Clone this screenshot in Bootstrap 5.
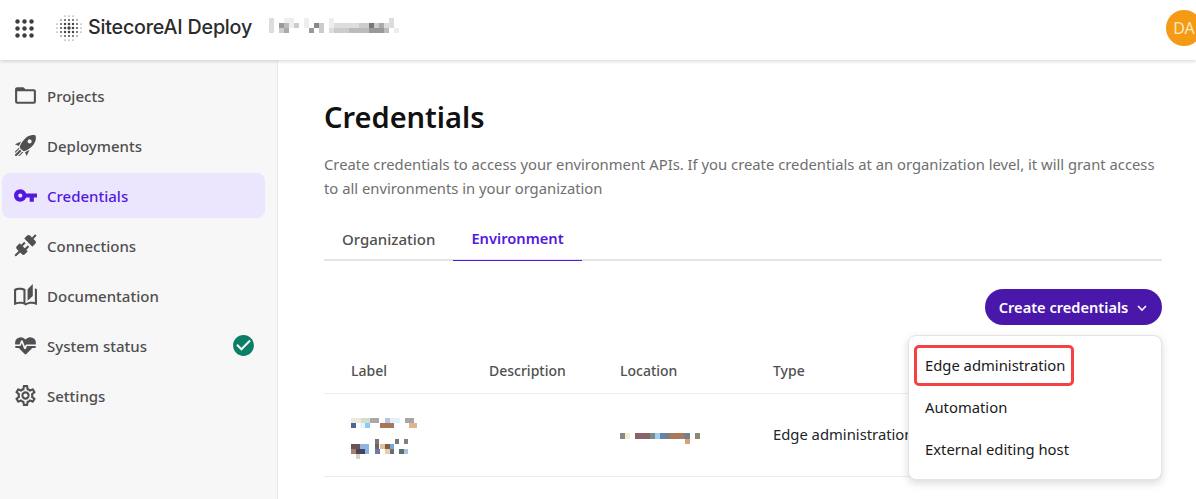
<!DOCTYPE html>
<html lang="en">
<head>
  <meta charset="UTF-8" />
  <meta name="viewport" content="width=device-width, initial-scale=1" />
  <title>Credentials - SitecoreAI Deploy</title>
  <link href="https://cdn.jsdelivr.net/npm/bootstrap@5.3.0/dist/css/bootstrap.min.css" rel="stylesheet" />
  <style>
    html, body { height: 100%; overflow: hidden; }
    body { font-family: "Noto Sans", sans-serif; font-size: 14.8px; color: #1a1a1a; background: #fff; }

    .app-header { height: 60px; padding: 0 0 4px 15px; background: #fff; box-shadow: 0 1px 4px rgba(0,0,0,.18); position: relative; z-index: 2; }
    .waffle { width: 19px; height: 19px; fill: #3d3d3d; }
    .logo { width: 26px; height: 26px; margin-left: 22px; margin-right: 6px; }
    .brand { font-family: Inter, sans-serif; font-size: 19.7px; font-weight: 500; color: #2b2b2b; letter-spacing: -.2px; }
    .org-blur { margin-left: 17px; }
    .avatar { width: 36px; height: 36px; margin-left: auto; margin-right: -6px; background: #f59a14; color: #fde7c0; font-size: 16px; }

    .app-body { height: 439px; }
    .sidebar { width: 278px; flex: none; padding: 13px 12px 0 2px; background: #f7f7f7; border-right: 1px solid #e8e8e8; gap: 5px; }
    .side-link { height: 45px; padding: 2px 9px 0 11px; gap: 9px; border-radius: 8px; color: #4f4f4f; font-size: 15px; font-weight: 500; text-decoration: none; }
    .side-link svg { width: 25px; height: 25px; margin-top: -2px; fill: #505050; flex: none; }
    .side-link.active { background: #ebe6fd; color: #5319e0; }
    .side-link.active svg { fill: #5319e0; }
    .side-link .status { margin-left: auto; fill: #0a7f66; }

    .content { padding: 0 34px 0 46px; min-width: 0; }
    .content h1 { margin: 37px 0 0; font-size: 29px; line-height: 40px; font-weight: 600; color: #111; }
    .lead-text { margin: 15px 0 0; line-height: 24px; color: #6f6f6f; }

    .tabs { margin-top: 17px; border-bottom: 2px solid #e4e4e4; height: 44px; }
    .tabs .nav-link { height: 44px; padding: 0 18px; border-radius: 0; color: #505050; font-size: 15px; font-weight: 500; display: flex; align-items: center; }
    .tabs .nav-link.active { color: #5319e0; font-size: 14.7px; font-weight: 600; border-bottom: 1px solid #5319e0; }

    .btn-create { height: 36px; width: 177px; padding: 1px 0 0; border: 0; border-radius: 18px; background: #4a17ab; color: #fff; font-weight: 600; font-size: 14.6px; gap: 8px; }
    .btn-create:hover, .btn-create:active { background: #4a17ab !important; color: #fff !important; }
    .btn-create svg { width: 12px; height: 12px; stroke: #fff; fill: none; stroke-width: 1.6; }
    .toolbar { margin-top: 28px; position: relative; }

    .menu { display: block; right: 0; top: 46px; width: 254px; padding: 9px 5px; border: 1px solid #e4e4e4; border-radius: 8px; box-shadow: 0 3px 8px rgba(0,0,0,.15); z-index: 3; font-size: 14.8px; }
    .menu .dropdown-item { height: 42px; padding: 0 11px; display: flex; align-items: center; color: #1a1a1a; }
    .menu .dropdown-item.marked { width: 160px; height: 41px; outline: 3px solid #f44144; outline-offset: -3px; border-radius: 5px; }

    .cred-table { margin: 22px 0 0; table-layout: fixed; width: 100%; --bs-table-border-color: #ececec; }
    .cred-table th { height: 46px; padding: 1px 0 0 27px; vertical-align: middle; color: #505050; font-size: 14px; font-weight: 500; }
    .cred-table td { height: 83px; padding: 0 0 0 27px; vertical-align: middle; white-space: nowrap; }
    .redact-label { margin-top: 9px; }
    .redact-location { margin-top: 8px; }
  </style>
</head>
<body class="d-flex flex-column">
  <header class="app-header d-flex align-items-center">
    <svg class="waffle" viewBox="0 0 19 19">
      <circle cx="2.5" cy="2.5" r="2.2"/><circle cx="9.5" cy="2.5" r="2.2"/><circle cx="16.5" cy="2.5" r="2.2"/>
      <circle cx="2.5" cy="9.5" r="2.2"/><circle cx="9.5" cy="9.5" r="2.2"/><circle cx="16.5" cy="9.5" r="2.2"/>
      <circle cx="2.5" cy="16.5" r="2.2"/><circle cx="9.5" cy="16.5" r="2.2"/><circle cx="16.5" cy="16.5" r="2.2"/>
    </svg>
    <svg class="logo" id="logo" viewBox="-13 -13 26 26" fill="#444"></svg>
    <span class="brand">SitecoreAI Deploy</span>
    <svg class="org-blur" id="orgBlur" width="140" height="20" viewBox="0 0 140 20"></svg>
    <div class="avatar rounded-circle d-flex align-items-center justify-content-center">DA</div>
  </header>

  <div class="app-body d-flex">
    <nav class="sidebar d-flex flex-column">
      <a href="#" class="side-link d-flex align-items-center">
        <svg viewBox="0 0 24 24"><path d="M20,18H4V8H20M20,6H12L10,4H4C2.89,4 2,4.89 2,6V18A2,2 0 0,0 4,20H20A2,2 0 0,0 22,18V8C22,6.89 21.1,6 20,6Z"/></svg>
        Projects
      </a>
      <a href="#" class="side-link d-flex align-items-center">
        <svg viewBox="0 0 24 24"><path d="M13.13 22.19L11.5 18.36C13.07 17.78 14.54 17 15.9 16.09L13.13 22.19M5.64 12.5L1.81 10.87L7.91 8.1C7 9.46 6.22 10.93 5.64 12.5M21.61 2.39C21.61 2.39 16.66 .269 11 5.93C8.81 8.12 7.5 10.53 6.65 12.64C6.37 13.39 6.56 14.21 7.11 14.77L9.24 16.89C9.79 17.45 10.61 17.63 11.36 17.35C13.5 16.53 15.88 15.19 18.07 13C23.73 7.34 21.61 2.39 21.61 2.39M14.54 9.46C13.76 8.68 13.76 7.41 14.54 6.63S16.59 5.85 17.37 6.63C18.14 7.41 18.15 8.68 17.37 9.46C16.59 10.24 15.32 10.24 14.54 9.46M6.24 22L9.88 18.36C9.54 18.27 9.21 18.12 8.91 17.91L4.83 22H6.24M2 22H3.41L8.18 17.24L6.76 15.83L2 20.59V22M2 19.17L6.09 15.09C5.88 14.79 5.73 14.47 5.64 14.12L2 17.76V19.17Z"/></svg>
        Deployments
      </a>
      <a href="#" class="side-link active d-flex align-items-center">
        <svg viewBox="0 0 24 24"><path d="M7 14C5.9 14 5 13.1 5 12S5.9 10 7 10 9 10.9 9 12 8.1 14 7 14M12.6 10C11.8 7.7 9.6 6 7 6C3.7 6 1 8.7 1 12S3.7 18 7 18C9.6 18 11.8 16.3 12.6 14H16V18H20V14H23V10H12.6Z"/></svg>
        Credentials
      </a>
      <a href="#" class="side-link d-flex align-items-center">
        <svg viewBox="0 0 24 24"><path d="M21.4 7.5C22.2 8.3 22.2 9.6 21.4 10.3L18.6 13.1L10.8 5.3L13.6 2.5C14.4 1.7 15.7 1.7 16.4 2.5L18.2 4.3L21.2 1.3L22.6 2.7L19.6 5.7L21.4 7.5M15.6 13.3L14.2 11.9L11.4 14.7L9.3 12.6L12.1 9.8L10.7 8.4L7.9 11.2L6.4 9.8L3.6 12.6C2.8 13.4 2.8 14.7 3.6 15.4L5.4 17.2L1.4 21.2L2.8 22.6L6.8 18.6L8.6 20.4C9.4 21.2 10.7 21.2 11.4 20.4L14.2 17.6L12.8 16.2L15.6 13.3Z"/></svg>
        Connections
      </a>
      <a href="#" class="side-link d-flex align-items-center">
        <svg viewBox="0 0 24 24"><path d="M19 1L14 6V17L19 12.5V1M21 5V18.5C19.9 18.15 18.7 18 17.5 18C15.8 18 13.35 18.65 12 19.5V6C10.55 4.9 8.45 4.5 6.5 4.5C4.55 4.5 2.45 4.9 1 6V20.65C1 20.9 1.25 21.15 1.5 21.15C1.6 21.15 1.65 21.1 1.75 21.1C3.1 20.45 5.05 20 6.5 20C8.45 20 10.55 20.4 12 21.5C13.35 20.65 15.8 20 17.5 20C19.15 20 20.85 20.3 22.25 21.05C22.35 21.1 22.4 21.1 22.5 21.1C22.75 21.1 23 20.85 23 20.6V6C22.4 5.55 21.75 5.25 21 5M10 18.41C8.75 18.09 7.5 18 6.5 18C5.44 18 4.18 18.19 3 18.5V7.13C3.91 6.73 5.14 6.5 6.5 6.5C7.86 6.5 9.09 6.73 10 7.13V18.41Z"/></svg>
        Documentation
      </a>
      <a href="#" class="side-link d-flex align-items-center">
        <svg viewBox="0 0 24 24"><path d="M7.5,4A5.5,5.5 0 0,0 2,9.5C2,10 2.09,10.5 2.22,11H6.3L7.57,7.63C7.87,6.83 9.05,6.75 9.43,7.63L11.5,13L12.09,11.58C12.22,11.25 12.57,11 13,11H21.78C21.91,10.5 22,10 22,9.5A5.5,5.5 0 0,0 16.5,4C14.64,4 13,4.93 12,6.34C11,4.93 9.36,4 7.5,4M3,12.5A1,1 0 0,0 2,13.5A1,1 0 0,0 3,14.5H5.44L11,20C12,20.9 12,20.9 13,20L18.56,14.5H21A1,1 0 0,0 22,13.5A1,1 0 0,0 21,12.5H13.4L12.47,14.8C12.07,15.81 10.92,15.67 10.55,14.83L8.5,9.5L7.54,11.83C7.39,12.23 7.05,12.5 6.6,12.5H3Z"/></svg>
        System status
        <svg class="status" viewBox="0 0 24 24"><path d="M12 2C6.5 2 2 6.5 2 12S6.5 22 12 22 22 17.5 22 12 17.5 2 12 2M10 17L5 12L6.41 10.59L10 14.17L17.59 6.58L19 8L10 17Z"/></svg>
      </a>
      <a href="#" class="side-link d-flex align-items-center">
        <svg viewBox="0 0 24 24"><path d="M12,8A4,4 0 0,1 16,12A4,4 0 0,1 12,16A4,4 0 0,1 8,12A4,4 0 0,1 12,8M12,10A2,2 0 0,0 10,12A2,2 0 0,0 12,14A2,2 0 0,0 14,12A2,2 0 0,0 12,10M10,22C9.75,22 9.54,21.82 9.5,21.58L9.13,18.93C8.5,18.68 7.96,18.34 7.44,17.94L4.95,18.95C4.73,19.03 4.46,18.95 4.34,18.73L2.34,15.27C2.21,15.05 2.27,14.78 2.46,14.63L4.57,12.97L4.5,12L4.57,11L2.46,9.37C2.27,9.22 2.21,8.95 2.34,8.73L4.34,5.27C4.46,5.05 4.73,4.96 4.95,5.05L7.44,6.05C7.96,5.66 8.5,5.32 9.13,5.07L9.5,2.42C9.54,2.18 9.75,2 10,2H14C14.25,2 14.46,2.18 14.5,2.42L14.87,5.07C15.5,5.32 16.04,5.66 16.56,6.05L19.05,5.05C19.27,4.96 19.54,5.05 19.66,5.27L21.66,8.73C21.79,8.95 21.73,9.22 21.54,9.37L19.43,11L19.5,12L19.43,13L21.54,14.63C21.73,14.78 21.79,15.05 21.66,15.27L19.66,18.73C19.54,18.95 19.27,19.04 19.05,18.95L16.56,17.95C16.04,18.34 15.5,18.68 14.87,18.93L14.5,21.58C14.46,21.82 14.25,22 14,22H10M11.25,4L10.88,6.61C9.68,6.86 8.62,7.5 7.85,8.39L5.44,7.35L4.69,8.65L6.8,10.2C6.4,11.37 6.4,12.64 6.8,13.8L4.68,15.36L5.43,16.66L7.86,15.62C8.63,16.5 9.68,17.14 10.87,17.38L11.24,20H12.76L13.13,17.39C14.32,17.14 15.37,16.5 16.14,15.62L18.57,16.66L19.32,15.36L17.2,13.81C17.6,12.64 17.6,11.37 17.2,10.2L19.31,8.65L18.56,7.35L16.15,8.39C15.38,7.5 14.32,6.86 13.12,6.62L12.75,4H11.25Z"/></svg>
        Settings
      </a>
    </nav>

    <main class="content flex-grow-1">
      <h1>Credentials</h1>
      <p class="lead-text">Create credentials to access your environment APIs. If you create credentials at an organization level, it will grant access to all environments in your organization</p>

      <ul class="nav tabs">
        <li class="nav-item"><a class="nav-link" href="#">Organization</a></li>
        <li class="nav-item"><a class="nav-link active" href="#">Environment</a></li>
      </ul>

      <div class="toolbar d-flex justify-content-end">
        <button class="btn btn-create d-flex align-items-center justify-content-center" type="button">
          Create credentials
          <svg viewBox="0 0 12 12"><path d="M2 4l4 4 4-4"/></svg>
        </button>
        <div class="dropdown-menu menu">
          <a class="dropdown-item marked" href="#">Edge administration</a>
          <a class="dropdown-item" href="#">Automation</a>
          <a class="dropdown-item" href="#">External editing host</a>
        </div>
      </div>

      <table class="table cred-table">
        <colgroup><col style="width:138px"><col style="width:131px"><col style="width:153px"><col></colgroup>
        <thead>
          <tr><th>Label</th><th>Description</th><th>Location</th><th>Type</th></tr>
        </thead>
        <tbody>
          <tr>
            <td>
              <svg width="66" height="43" viewBox="0 0 66 43" class="d-block redact-label">
                <rect x="0" y="0" width="10" height="5" fill="#eee9e0"/><rect x="10" y="0" width="9" height="5" fill="#d5dccb"/><rect x="19" y="0" width="9" height="5" fill="#a9a9a9"/><rect x="34" y="0" width="5" height="5" fill="#b7c6de"/><rect x="39" y="0" width="10" height="5" fill="#e0f3fb"/><rect x="54" y="0" width="9" height="5" fill="#aaa6a3"/>
                <rect x="0" y="5" width="5" height="5" fill="#4c6698"/><rect x="9" y="5" width="5" height="5" fill="#dff8ff"/><rect x="14" y="5" width="5" height="5" fill="#8fc8f3"/><rect x="29" y="5" width="14" height="5" fill="#a8775a"/><rect x="58" y="5" width="9" height="5" fill="#dcb68f"/>
                <rect x="24" y="21" width="4" height="5" fill="#777"/><rect x="44" y="21" width="4" height="5" fill="#777"/><rect x="53" y="21" width="4" height="5" fill="#808080"/>
                <rect x="0" y="26" width="9" height="5" fill="#6f5158"/><rect x="9" y="26" width="9" height="5" fill="#8fb5de"/><rect x="24" y="26" width="4" height="5" fill="#666"/><rect x="29" y="26" width="5" height="5" fill="#e0bf9d"/><rect x="34" y="26" width="5" height="5" fill="#8a5a3c"/><rect x="39" y="26" width="4" height="5" fill="#6fa9dc"/>
                <rect x="0" y="31" width="5" height="5" fill="#a8806b"/><rect x="5" y="31" width="9" height="5" fill="#44465f"/><rect x="14" y="31" width="4" height="5" fill="#8fb5de"/><rect x="24" y="31" width="5" height="5" fill="#6a7d9e"/><rect x="34" y="31" width="5" height="5" fill="#e3cfb4"/><rect x="39" y="31" width="4" height="5" fill="#726c69"/><rect x="48" y="31" width="5" height="5" fill="#5f6f70"/><rect x="53" y="31" width="4" height="5" fill="#a6c5e2"/>
                <rect x="5" y="36" width="4" height="5" fill="#e3cdc2"/>
              </svg>
            </td>
            <td></td>
            <td>
              <svg width="82" height="12" viewBox="0 0 82 12" class="d-block redact-location">
                <rect x="0" y="0" width="5" height="6" fill="#888"/><rect x="5" y="0" width="5" height="6" fill="#f0eed0"/><rect x="15" y="0" width="15" height="6" fill="#8a6367"/><rect x="30" y="0" width="5" height="6" fill="#7d8a8a"/><rect x="35" y="0" width="5" height="6" fill="#a6cfee"/><rect x="40" y="0" width="5" height="6" fill="#5f86ad"/><rect x="45" y="0" width="5" height="6" fill="#7d7d88"/><rect x="50" y="0" width="15" height="6" fill="#a87a5c"/><rect x="65" y="0" width="5" height="6" fill="#6f7f94"/><rect x="75" y="0" width="5" height="6" fill="#8a8a72"/>
                <rect x="65" y="6" width="5" height="5" fill="#d9a070"/>
              </svg>
            </td>
            <td>Edge administration</td>
          </tr>
        </tbody>
      </table>
    </main>
  </div>

  <script src="https://cdn.jsdelivr.net/npm/bootstrap@5.3.0/dist/js/bootstrap.bundle.min.js"></script>
  <script>
    // dotted globe logo: dots get smaller toward the rim
    let dots = '';
    for (let y = -12; y <= 12; y += 4) {
      for (let x = -12; x <= 12; x += 4) {
        const d = Math.hypot(x, y);
        if (d > 14) continue;
        const r = 1.7 - d * 0.09;
        dots += `<circle cx="${x}" cy="${y}" r="${Math.max(r, 0.5).toFixed(2)}"/>`;
      }
    }
    document.getElementById('logo').innerHTML = dots;

    // pixelated org name, one hex grey per 5px cell
    const blurRows = [
      'd..ee..e....e...........d',
      'd.9bec.e.8c.edddddcc7cadd.ff',
      'd.cafff.9.c.dcccbbbb999b.e',
      '................f'
    ];
    let cells = '';
    blurRows.forEach((row, r) => {
      [...row].forEach((g, c) => {
        if (g !== '.') cells += `<rect x="${c * 5}" y="${r * 5}" width="5" height="5" fill="#${g}${g}${g}"/>`;
      });
    });
    document.getElementById('orgBlur').innerHTML = cells;
  </script>
</body>
</html>
